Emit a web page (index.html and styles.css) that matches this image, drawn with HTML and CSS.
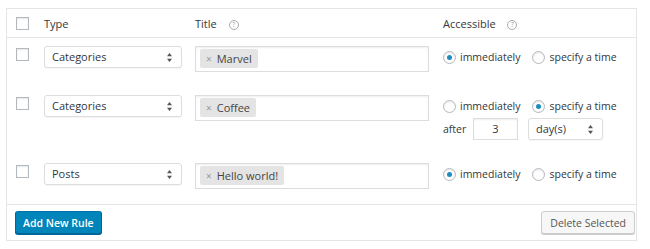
FILE: index.html
```html
<html>
  <head>
    <title>Access Rules</title>
    <link rel="stylesheet" href="styles.css">
  </head>
  <body>
    <div class="rules">
      <div class="row head">
        <div><span class="cb"></span></div>
        <div>Type</div>
        <div>Title <span class="help">?</span></div>
        <div>Accessible <span class="help">?</span></div>
      </div>

      <div class="row">
        <div><span class="cb"></span></div>
        <div>
          <div class="select type-select">Categories
            <svg class="arrows" width="5" height="9" viewBox="0 0 5 9"><path d="M2.5 0L5 3.3H0z M2.5 9L5 5.7H0z" fill="#555"/></svg>
          </div>
        </div>
        <div>
          <div class="tags"><span class="tag"><span class="x">&times;</span>Marvel</span></div>
        </div>
        <div>
          <div class="opts">
            <label class="opt"><span class="radio on"></span>immediately</label>
            <label class="opt"><span class="radio"></span>specify a time</label>
          </div>
        </div>
      </div>

      <div class="row">
        <div><span class="cb"></span></div>
        <div>
          <div class="select type-select">Categories
            <svg class="arrows" width="5" height="9" viewBox="0 0 5 9"><path d="M2.5 0L5 3.3H0z M2.5 9L5 5.7H0z" fill="#555"/></svg>
          </div>
        </div>
        <div>
          <div class="tags"><span class="tag"><span class="x">&times;</span>Coffee</span></div>
        </div>
        <div>
          <div class="opts">
            <label class="opt"><span class="radio"></span>immediately</label>
            <label class="opt"><span class="radio on"></span>specify a time</label>
          </div>
          <div class="after">
            <span class="after-label">after</span>
            <span class="num">3</span>
            <div class="select unit-select">day(s)
              <svg class="arrows" width="5" height="9" viewBox="0 0 5 9"><path d="M2.5 0L5 3.3H0z M2.5 9L5 5.7H0z" fill="#555"/></svg>
            </div>
          </div>
        </div>
      </div>

      <div class="row">
        <div><span class="cb"></span></div>
        <div>
          <div class="select type-select">Posts
            <svg class="arrows" width="5" height="9" viewBox="0 0 5 9"><path d="M2.5 0L5 3.3H0z M2.5 9L5 5.7H0z" fill="#555"/></svg>
          </div>
        </div>
        <div>
          <div class="tags"><span class="tag"><span class="x">&times;</span>Hello world!</span></div>
        </div>
        <div>
          <div class="opts">
            <label class="opt"><span class="radio on"></span>immediately</label>
            <label class="opt"><span class="radio"></span>specify a time</label>
          </div>
        </div>
      </div>

      <div class="foot">
        <button class="btn btn-primary">Add New Rule</button>
        <button class="btn">Delete Selected</button>
      </div>
    </div>
  </body>
</html>
```

FILE: styles.css
```css
body {
  margin: 0;
  background: #fff;
  font-family: "Open Sans", sans-serif;
  font-size: 10.5px;
  color: #32373c;
}

.rules {
  margin: 8px 0 0 6px;
  width: 631px;
  border: 1px solid #e5e5e5;
  box-sizing: border-box;
  background: #fff;
}

.row {
  display: grid;
  grid-template-columns: 28px 151px 248px 1fr;
  padding: 8px 0 15px 9px;
  align-items: start;
}

.head {
  height: 29px;
  box-sizing: border-box;
  padding: 0 0 0 9px;
  align-items: center;
  border-bottom: 1px solid #e5e5e5;
  font-size: 11px;
}

.head .cb {
  margin-top: 0;
}

.cb {
  display: block;
  width: 11px;
  height: 11px;
  margin-top: 2px;
  border: 1px solid #b4b9be;
  background: #fff;
  box-shadow: inset 0 1px 2px rgba(0, 0, 0, 0.1);
}

.help {
  display: inline-block;
  width: 8px;
  height: 8px;
  margin-left: 9px;
  border: 1px solid #aaa;
  border-radius: 50%;
  color: #999;
  font-size: 6.5px;
  line-height: 8px;
  text-align: center;
  vertical-align: 1px;
}

.select {
  position: relative;
  box-sizing: border-box;
  height: 22px;
  line-height: 20px;
  padding-left: 7px;
  border: 1px solid #ddd;
  border-radius: 3px;
  background: #fff;
  box-shadow: 0 1px 1px rgba(0, 0, 0, 0.04);
  color: #32373c;
  font-size: 11px;
}

.type-select {
  width: 138px;
}

.unit-select {
  width: 75px;
}

.arrows {
  position: absolute;
  right: 9px;
  top: 6px;
}

.tags {
  box-sizing: border-box;
  width: 234px;
  height: 26px;
  padding: 2px 4px;
  border: 1px solid #ddd;
  background: #fff;
  box-shadow: inset 0 1px 2px rgba(0, 0, 0, 0.07);
}

.tag {
  display: inline-block;
  height: 19px;
  line-height: 19px;
  padding: 0 6px;
  border-radius: 2px;
  background: #e4e4e4;
  color: #444;
  font-size: 11px;
}

.tag .x {
  margin-right: 5px;
  color: #999;
  font-size: 10px;
}

.opts {
  display: flex;
  align-items: center;
  gap: 12px;
  height: 22px;
}

.opt {
  display: flex;
  align-items: center;
  gap: 4px;
}

.radio {
  position: relative;
  width: 11px;
  height: 11px;
  border: 1px solid #b4b9be;
  border-radius: 50%;
  background: #fff;
  box-shadow: inset 0 1px 2px rgba(0, 0, 0, 0.1);
}

.radio.on::after {
  content: "";
  position: absolute;
  left: 3px;
  top: 3px;
  width: 5px;
  height: 5px;
  border-radius: 50%;
  background: #1e8cbe;
}

.after {
  display: flex;
  align-items: center;
  margin-top: 1px;
  height: 22px;
}

.after-label {
  width: 30px;
}

.num {
  box-sizing: border-box;
  width: 45px;
  height: 22px;
  line-height: 20px;
  margin-right: 10px;
  border: 1px solid #ddd;
  box-shadow: inset 0 1px 2px rgba(0, 0, 0, 0.07);
  text-align: center;
  font-size: 11px;
}

.foot {
  display: flex;
  justify-content: space-between;
  padding: 6px 1px 6px 8px;
  border-top: 1px solid #e5e5e5;
}

.btn {
  height: 23px;
  padding: 0 8px;
  border: 1px solid #ccc;
  border-radius: 3px;
  background: #f7f7f7;
  box-shadow: 0 1px 0 #ccc;
  color: #555;
  font-family: "Open Sans", sans-serif;
  font-size: 10.5px;
}

.btn-primary {
  padding: 0 7px;
  border-color: #0073aa #006799 #006799;
  background: #0085ba;
  box-shadow: 0 1px 0 #006799;
  color: #fff;
  font-weight: 600;
}
```
